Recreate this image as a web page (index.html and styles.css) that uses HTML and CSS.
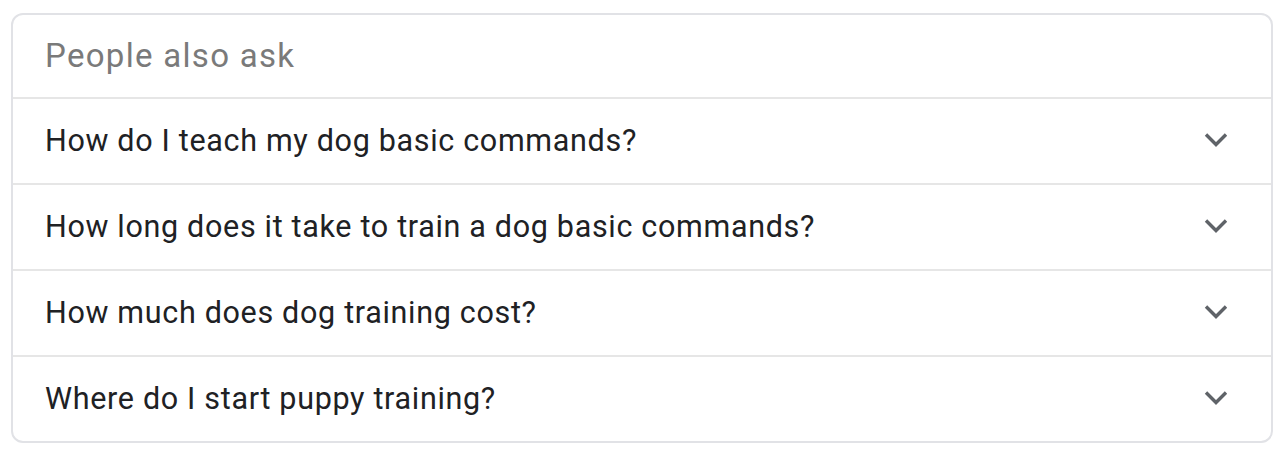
FILE: index.html
```html
<!DOCTYPE html>
<html>
<head>
<meta charset="utf-8">
<link rel="stylesheet" href="styles.css">
</head>
<body>
<div class="card">
  <div class="header">People also ask</div>
  <div class="row"><span class="q">How do I teach my dog basic commands?</span><svg class="chev" viewBox="0 0 24 16"><path d="M2 2.5 L12 12.5 L22 2.5"/></svg></div>
  <div class="row"><span class="q">How long does it take to train a dog basic commands?</span><svg class="chev" viewBox="0 0 24 16"><path d="M2 2.5 L12 12.5 L22 2.5"/></svg></div>
  <div class="row"><span class="q">How much does dog training cost?</span><svg class="chev" viewBox="0 0 24 16"><path d="M2 2.5 L12 12.5 L22 2.5"/></svg></div>
  <div class="row"><span class="q">Where do I start puppy training?</span><svg class="chev" viewBox="0 0 24 16"><path d="M2 2.5 L12 12.5 L22 2.5"/></svg></div>
</div>
</body>
</html>
```
FILE: styles.css
```css
html, body { margin: 0; padding: 0; background: #fff; }
body { padding: 13px 11px; font-family: Roboto, "Liberation Sans", Arial, sans-serif; }
.card {
  width: 1262px;
  box-sizing: border-box;
  border: 2px solid #e1e2e6;
  border-radius: 12px;
  overflow: hidden;
}
.header {
  box-sizing: border-box;
  height: 84px;
  display: flex;
  align-items: center;
  padding-left: 32px;
  padding-bottom: 1px;
  font-size: 33px;
  letter-spacing: 1.3px;
  color: #7a7a7a;
  border-bottom: 2px solid #e6e6e6;
}
.row {
  height: 84px;
  display: flex;
  align-items: center;
  justify-content: space-between;
  padding: 0 32px;
  border-bottom: 2px solid #e6e6e6;
}
.row:last-child { border-bottom: none; }
.q { font-size: 30.5px; letter-spacing: 0.68px; color: #202124; padding-bottom: 2px; }
.chev { width: 24px; height: 16px; margin-right: 11px; margin-bottom: 2px; }
.chev path { fill: none; stroke: #5f6368; stroke-width: 3.4; }
```
